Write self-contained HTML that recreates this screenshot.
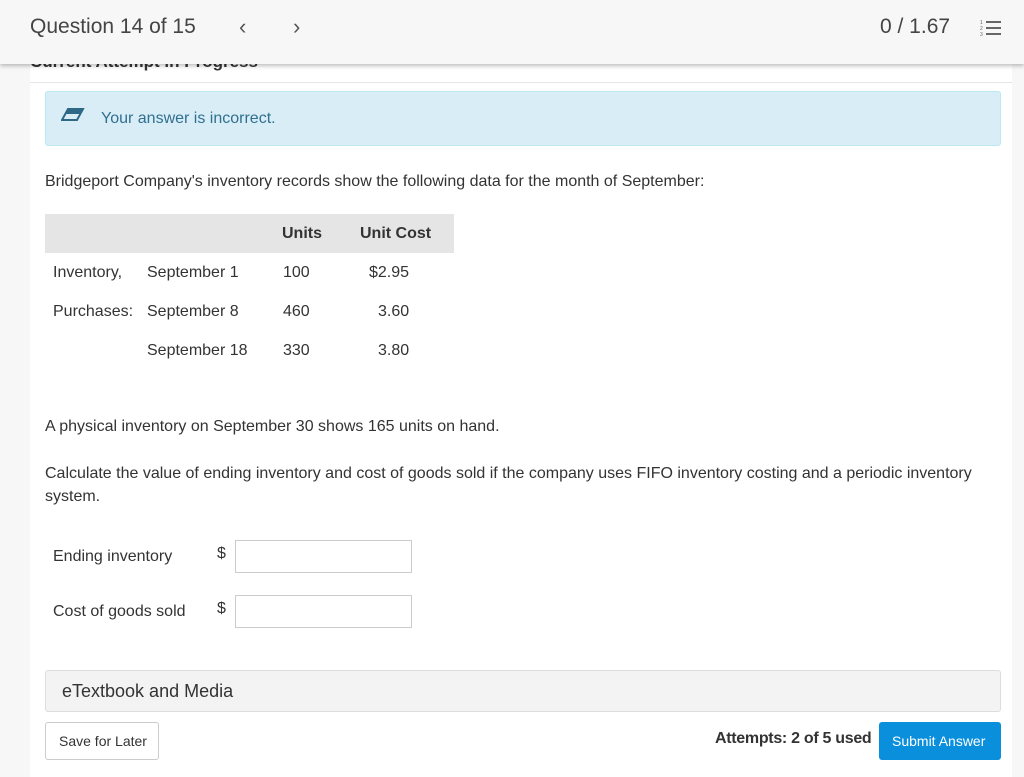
<!DOCTYPE html>
<html><head><meta charset="utf-8"><style>
*{box-sizing:border-box;margin:0;padding:0}
body{width:1024px;height:777px;overflow:hidden;background:#f7f7f7;font-family:"Liberation Sans",sans-serif;color:#333;position:relative}
.main{position:absolute;left:30px;top:0;width:982px;height:777px;background:#fff}
.hdr{position:absolute;left:0;top:0;width:1024px;height:64px;background:#f7f7f7;box-shadow:0 2px 4px rgba(0,0,0,.25);z-index:5}
.abs{position:absolute;white-space:nowrap}
.t{font-size:16px;color:#333}
</style></head><body>
<div class="main">
 <div class="abs" style="left:0;top:52px;font-size:17px;font-weight:bold;color:#333;">Current Attempt in Progress</div>
 <div class="abs" style="left:0;top:82px;width:982px;border-top:1px solid #e5e5e5"></div>
</div>
<div class="hdr">
 <div class="abs" style="left:30px;top:15px;font-size:21px;color:#444">Question 14 of 15</div>
 <div class="abs" style="left:239px;top:14px;font-size:22px;color:#555">&#x2039;</div>
 <div class="abs" style="left:293px;top:14px;font-size:22px;color:#555">&#x203A;</div>
 <div class="abs" style="left:880px;top:15px;font-size:21px;color:#444">0 / 1.67</div>
 <svg class="abs" style="left:980px;top:19px" width="22" height="18"><g fill="#666" font-size="5" font-family="Liberation Sans"><text x="0" y="5">1</text><text x="0" y="11">2</text><text x="0" y="17">3</text></g><rect x="6" y="2" width="15" height="2" fill="#666"/><rect x="6" y="8" width="15" height="2" fill="#666"/><rect x="6" y="14" width="15" height="2" fill="#666"/></svg>
</div>
<div class="abs" style="left:45px;top:91px;width:956px;height:55px;background:#d9edf7;border:1px solid #bce8f1;border-radius:3px"></div>
<svg class="abs" style="left:61px;top:108px" width="24" height="14"><path d="M7 1 L22 1 L16 12 L1 12 Z" fill="none" stroke="#2d6987" stroke-width="2"/><path d="M7 1 L22 1 L19 6 L4 6 Z" fill="#2d6987"/></svg>
<div class="abs" style="left:101px;top:110px;font-size:16px;color:#31708f">Your answer is incorrect.</div>
<div class="abs t" style="left:45px;top:173px">Bridgeport Company's inventory records show the following data for the month of September:</div>
<div class="abs" style="left:45px;top:214px;width:409px;height:39px;background:#e5e5e5"></div>
<div class="abs t" style="left:282px;top:225px;font-weight:bold">Units</div>
<div class="abs t" style="left:360px;top:225px;font-weight:bold">Unit Cost</div>
<div class="abs t" style="left:53px;top:264px">Inventory,</div>
<div class="abs t" style="left:147px;top:264px">September 1</div>
<div class="abs t" style="left:283px;top:264px">100</div>
<div class="abs t" style="left:369px;top:264px">$2.95</div>
<div class="abs t" style="left:53px;top:303px">Purchases:</div>
<div class="abs t" style="left:147px;top:303px">September 8</div>
<div class="abs t" style="left:283px;top:303px">460</div>
<div class="abs t" style="left:378px;top:303px">3.60</div>
<div class="abs t" style="left:147px;top:342px">September 18</div>
<div class="abs t" style="left:283px;top:342px">330</div>
<div class="abs t" style="left:378px;top:342px">3.80</div>
<div class="abs t" style="left:45px;top:418px">A physical inventory on September 30 shows 165 units on hand.</div>
<div class="abs t" style="left:45px;top:462px;white-space:normal;width:935px;line-height:23px">Calculate the value of ending inventory and cost of goods sold if the company uses FIFO inventory costing and a periodic inventory system.</div>
<div class="abs t" style="left:53px;top:548px">Ending inventory</div>
<div class="abs t" style="left:217px;top:545px">$</div>
<div class="abs" style="left:235px;top:540px;width:177px;height:33px;border:1px solid #ccc"></div>
<div class="abs t" style="left:53px;top:603px">Cost of goods sold</div>
<div class="abs t" style="left:217px;top:600px">$</div>
<div class="abs" style="left:235px;top:595px;width:177px;height:33px;border:1px solid #ccc"></div>
<div class="abs" style="left:45px;top:670px;width:956px;height:42px;background:#f3f3f3;border:1px solid #ddd;border-radius:3px"></div>
<div class="abs" style="left:62px;top:681px;font-size:18px;color:#333">eTextbook and Media</div>
<div class="abs" style="left:45px;top:722px;width:114px;height:38px;border:1px solid #ccc;border-radius:3px;background:#fff"></div>
<div class="abs" style="left:59px;top:733px;font-size:14px;color:#333">Save for Later</div>
<div class="abs" style="left:715px;top:730px;font-size:16px;font-weight:bold;color:#333;letter-spacing:-0.3px">Attempts: 2 of 5 used</div>
<div class="abs" style="left:879px;top:722px;width:122px;height:38px;background:#0a8fdc;border-radius:3px"></div>
<div class="abs" style="left:892px;top:733px;font-size:14px;color:#fff">Submit Answer</div>
</body></html>
